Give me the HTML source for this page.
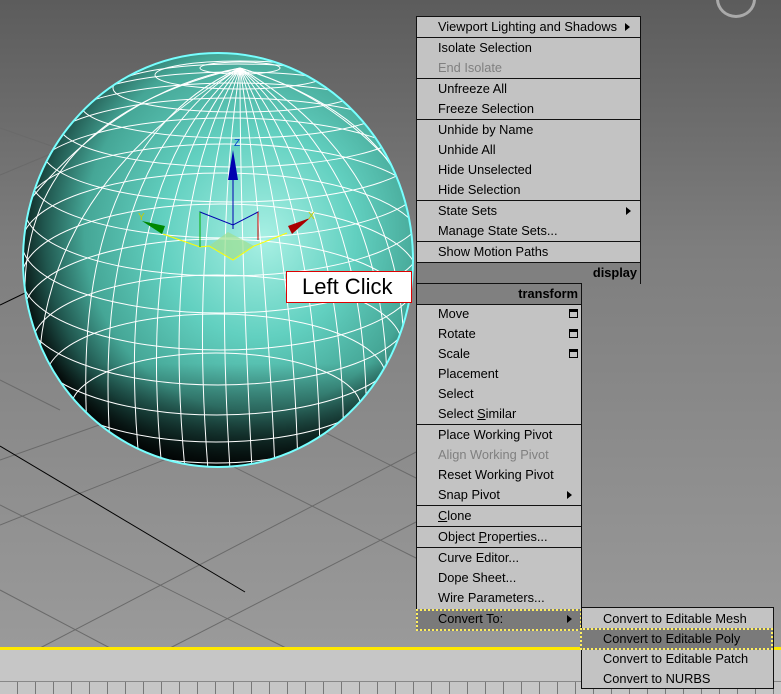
<!DOCTYPE html>
<html><head><style>
*{margin:0;padding:0;box-sizing:border-box}
body{width:781px;height:694px;overflow:hidden;position:relative;background:linear-gradient(#5c5c5c 0px,#7e7e7e 250px,#9a9a9a 648px);font-family:"Liberation Sans",Arial,sans-serif;font-size:12.8px}
.m{position:absolute;background:#c3c3c3;border:1px solid #111}
.r{position:absolute;left:21px;height:20px;line-height:20px;color:#000;white-space:nowrap}
.d{color:#808080}
.s{position:absolute;left:0;right:0;height:1px;background:#111}
.h{position:absolute;left:0;right:0;background:#808080;font-weight:bold;text-align:right;padding-right:3px;line-height:20px;height:21px}
.ar{position:absolute;width:0;height:0;border-left:5px solid #000;border-top:4px solid transparent;border-bottom:4px solid transparent}
.ic{position:absolute;width:9px;height:9px;border:1px solid #000;border-top-width:3px}
u{text-decoration:underline}
</style></head><body>
<svg width="781" height="694" style="position:absolute;left:0;top:0">
<defs>
<radialGradient id="g" cx="0.58" cy="0.42" r="0.62" fx="0.62" fy="0.45">
<stop offset="0" stop-color="#a8f0e4"/><stop offset="0.4" stop-color="#62d0c0"/><stop offset="0.7" stop-color="#45a696"/><stop offset="0.86" stop-color="#20564e"/><stop offset="1" stop-color="#000"/>
</radialGradient>
<linearGradient id="b" x1="0" y1="0" x2="0" y2="1">
<stop offset="0.75" stop-color="#000" stop-opacity="0"/><stop offset="1" stop-color="#000" stop-opacity="0.85"/>
</linearGradient>
<clipPath id="c"><ellipse cx="218" cy="260" rx="195" ry="207"/></clipPath>
</defs>
<g stroke="#6a6a6a" stroke-width="1" fill="none">
<line x1="0" y1="128" x2="120" y2="170"/><line x1="0" y1="175" x2="60" y2="150"/>
<line x1="0" y1="460" x2="170" y2="400"/><line x1="0" y1="525" x2="290" y2="410"/>
<line x1="40" y1="648" x2="420" y2="450"/><line x1="170" y1="648" x2="420" y2="520"/>
<line x1="0" y1="505" x2="290" y2="650"/><line x1="0" y1="590" x2="110" y2="648"/>
<line x1="100" y1="400" x2="420" y2="560"/><line x1="280" y1="410" x2="420" y2="480"/>
<line x1="0" y1="380" x2="60" y2="410"/>
</g>
<line x1="0" y1="446" x2="245" y2="592" stroke="#000" stroke-width="1"/>
<line x1="0" y1="305" x2="25" y2="293" stroke="#000" stroke-width="1"/>
<ellipse cx="218" cy="260" rx="195" ry="207" fill="url(#g)"/>
<ellipse cx="218" cy="260" rx="195" ry="207" fill="url(#b)"/>
<g clip-path="url(#c)" stroke="#fff" stroke-width="1" fill="none">
<ellipse cx="240" cy="68" rx="40" ry="6"/>
<ellipse cx="240" cy="75" rx="85" ry="14"/>
<ellipse cx="238" cy="88" rx="125" ry="24"/>
<ellipse cx="236" cy="105" rx="155" ry="33"/>
<ellipse cx="234" cy="125" rx="175" ry="42"/>
<ellipse cx="232" cy="150" rx="190" ry="52"/>
<ellipse cx="228" cy="178" rx="198" ry="60"/>
<ellipse cx="225" cy="210" rx="200" ry="66"/>
<ellipse cx="222" cy="243" rx="200" ry="70"/>
<ellipse cx="220" cy="277" rx="198" ry="73"/>
<ellipse cx="218" cy="312" rx="194" ry="73"/>
<ellipse cx="217" cy="345" rx="185" ry="70"/>
<ellipse cx="216" cy="378" rx="170" ry="64"/>
<ellipse cx="216" cy="408" rx="145" ry="55"/>
<path d="M240 68 Q60 150 90 470"/><path d="M240 68 Q20 200 40 420"/>
<path d="M240 68 Q110 180 140 470"/><path d="M240 68 Q160 200 185 470"/>
<path d="M240 68 Q215 230 230 470"/><path d="M240 68 Q265 230 275 470"/>
<path d="M240 68 Q320 220 320 470"/><path d="M240 68 Q380 200 365 470"/>
<path d="M240 68 Q430 180 400 420"/><path d="M240 68 Q440 130 420 300"/>
<path d="M240 68 Q20 120 25 300"/><path d="M240 68 Q350 100 420 200"/>
<path d="M240 68 Q120 90 30 200"/>
<path d="M240 68 Q85 165 112 470"/><path d="M240 68 Q135 190 162 470"/>
<path d="M240 68 Q188 215 208 470"/><path d="M240 68 Q240 230 252 470"/>
<path d="M240 68 Q292 225 298 470"/><path d="M240 68 Q350 210 343 470"/>
<path d="M240 68 Q405 190 385 450"/>
</g>
<ellipse cx="218" cy="260" rx="195" ry="207" fill="none" stroke="#7ff" stroke-width="2"/>
<polygon points="209,246 228,232 254,246 233,260" fill="#a0e090" opacity="0.7"/>
<polyline points="163,234 200,247 209,246 233,260 254,246 287,233" fill="none" stroke="#ff0" stroke-width="1"/>
<line x1="233" y1="229" x2="233" y2="155" stroke="#0000b0"/>
<polygon points="233,150 228,180 238,180" fill="#0000b0"/>
<polyline points="200,247 200,212 233,225 258,212 258,240" fill="none" stroke="#0000b0"/>
<line x1="200" y1="212" x2="200" y2="247" stroke="#0a0"/><line x1="258" y1="212" x2="258" y2="240" stroke="#c00"/>
<polygon points="142,221 165,226 162,234" fill="#080"/>
<polygon points="310,218 288,226 292,234" fill="#a00"/>
<text x="234" y="146" fill="#0044cc" font-size="10" font-family="Liberation Sans">Z</text>
<text x="138" y="220" fill="#cc0" font-size="10" font-family="Liberation Sans">Y</text>
<text x="308" y="219" fill="#cc0" font-size="10" font-family="Liberation Sans">X</text>
</svg>
<div style="position:absolute;left:286px;top:271px;width:126px;height:32px;background:#fff;border:1px solid #d00;font-size:22px;line-height:30px;padding-left:15px;color:#000">Left Click</div>
<div style="position:absolute;left:0;top:647px;width:781px;height:3px;background:#ffe800"></div>
<div style="position:absolute;left:0;top:650px;width:781px;height:44px;background:#c6c6c6"></div>
<div style="position:absolute;left:0;top:681px;width:781px;height:1px;background:#888"></div>
<div style="position:absolute;left:0;top:682px;width:781px;height:12px;background:repeating-linear-gradient(90deg,#c6c6c6 0 17px,#777 17px 18px)"></div>

<div class="m" style="left:416px;top:16px;width:225px;height:268px">
<div class="r" style="top:0">Viewport Lighting and Shadows</div><div class="ar" style="left:208px;top:6px"></div>
<div class="s" style="top:20px"></div>
<div class="r" style="top:21px">Isolate Selection</div>
<div class="r d" style="top:41px">End Isolate</div>
<div class="s" style="top:61px"></div>
<div class="r" style="top:62px">Unfreeze All</div>
<div class="r" style="top:82px">Freeze Selection</div>
<div class="s" style="top:102px"></div>
<div class="r" style="top:103px">Unhide by Name</div>
<div class="r" style="top:123px">Unhide All</div>
<div class="r" style="top:143px">Hide Unselected</div>
<div class="r" style="top:163px">Hide Selection</div>
<div class="s" style="top:183px"></div>
<div class="r" style="top:184px">State Sets</div><div class="ar" style="left:209px;top:190px"></div>
<div class="r" style="top:204px">Manage State Sets...</div>
<div class="s" style="top:224px"></div>
<div class="r" style="top:225px">Show Motion Paths</div>
<div class="s" style="top:245px"></div>
<div class="h" style="top:246px">display</div>
</div>

<div class="m" style="left:416px;top:283px;width:166px;height:348px">
<div class="h" style="top:0">transform</div>
<div class="s" style="top:20px"></div>
<div class="r" style="top:20px">Move</div><div class="ic" style="left:152px;top:25px"></div>
<div class="r" style="top:40px">Rotate</div><div class="ic" style="left:152px;top:45px"></div>
<div class="r" style="top:60px">Scale</div><div class="ic" style="left:152px;top:65px"></div>
<div class="r" style="top:80px">Placement</div>
<div class="r" style="top:100px">Select</div>
<div class="r" style="top:120px">Select <u>S</u>imilar</div>
<div class="s" style="top:140px"></div>
<div class="r" style="top:141px">Place Working Pivot</div>
<div class="r d" style="top:161px">Align Working Pivot</div>
<div class="r" style="top:181px">Reset Working Pivot</div>
<div class="r" style="top:201px">Snap Pivot</div><div class="ar" style="left:150px;top:207px"></div>
<div class="s" style="top:221px"></div>
<div class="r" style="top:222px"><u>C</u>lone</div>
<div class="s" style="top:242px"></div>
<div class="r" style="top:243px">Object <u>P</u>roperties...</div>
<div class="s" style="top:263px"></div>
<div class="r" style="top:264px">Curve Editor...</div>
<div class="r" style="top:284px">Dope Sheet...</div>
<div class="r" style="top:304px">Wire Parameters...</div>
<div style="position:absolute;left:-1px;top:325px;width:166px;height:22px;background:#7a7a7a;border:2px dotted #ffef60"></div>
<div class="r" style="top:325px">Convert To:</div><div class="ar" style="left:150px;top:331px"></div>
</div>

<div class="m" style="left:581px;top:607px;width:193px;height:82px">
<div class="r" style="top:1px">Convert to Editable Mesh</div>
<div style="position:absolute;left:-2px;top:20px;width:193px;height:22px;background:#7a7a7a;border:2px dotted #ffef60"></div>
<div class="r" style="top:21px">Convert to Editable Poly</div>
<div class="r" style="top:41px">Convert to Editable Patch</div>
<div class="r" style="top:61px">Convert to NURBS</div>
</div>
<div style="position:absolute;left:716px;top:-20px;width:40px;height:38px;border-radius:50%;border:3px solid #aaa"></div>
</body></html>
